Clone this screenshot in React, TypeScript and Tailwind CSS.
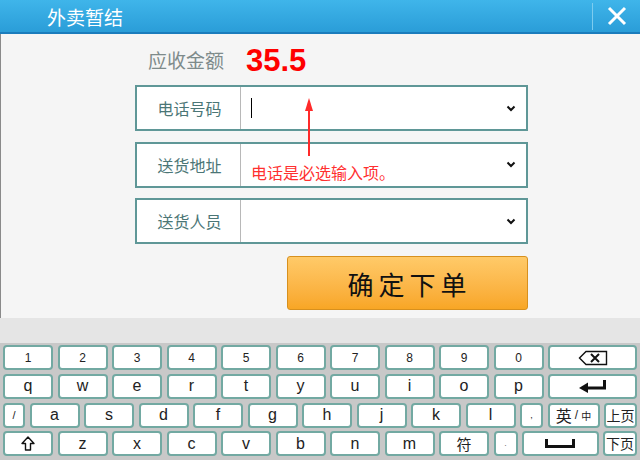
import type { ReactNode } from 'react'

const cjk = { fontFamily: '"Noto Sans CJK SC", "Liberation Sans", sans-serif' }
const latin = { fontFamily: '"Liberation Sans", Arial, sans-serif' }

function Chevron() {
  return (
    <svg width="10" height="7" viewBox="0 0 10 7" className="mr-[10px]">
      <polyline points="1.5,1.5 5,5 8.5,1.5" fill="none" stroke="#111" strokeWidth="2" />
    </svg>
  )
}

function Field({ label, cursor }: { label: string; cursor?: boolean }) {
  return (
    <div className="flex h-[46px] w-[393px] items-stretch border-2 border-[#5f9797] bg-white">
      <div className="flex w-[104px] items-center justify-center border-r border-[#b8b8b8] pl-[2px] text-[16px] text-[#4b7676]" style={cjk}>
        {label}
      </div>
      <div className="flex flex-1 items-center justify-between pl-[10px]">
        {cursor ? <span className="h-[20px] w-px bg-black" /> : <span />}
        <Chevron />
      </div>
    </div>
  )
}

function Key({ w, children, className = '' }: { w?: string; children: ReactNode; className?: string }) {
  return (
    <div
      className={`flex h-[25px] items-center justify-center rounded-[4px] border-2 border-[#72a9a2] bg-white text-[#222] ${w ?? 'w-[50px]'} ${className}`}
      style={latin}
    >
      {children}
    </div>
  )
}

function Backspace() {
  return (
    <svg width="30" height="16" viewBox="0 0 30 16">
      <path d="M8 1.5 H28.5 V14.5 H8 L1.5 8 Z" fill="none" stroke="#111" strokeWidth="1.4" />
      <path d="M13 4 L21 12 M21 4 L13 12" stroke="#111" strokeWidth="2" />
    </svg>
  )
}

function Enter() {
  return (
    <svg width="30" height="14" viewBox="0 0 30 14">
      <path d="M26.5 1 V9 H8" fill="none" stroke="#111" strokeWidth="3" />
      <path d="M1 9 L10 3.5 V14 Z" fill="#111" />
    </svg>
  )
}

function Shift() {
  return (
    <svg width="14" height="15" viewBox="0 0 14 15">
      <path d="M7 1 L13 7.5 H9.5 V14 H4.5 V7.5 H1 Z" fill="none" stroke="#111" strokeWidth="1.4" strokeLinejoin="round" />
    </svg>
  )
}

function Space() {
  return (
    <svg width="30" height="9" viewBox="0 0 30 9">
      <path d="M1.5 0 V7.5 H28.5 V0" fill="none" stroke="#111" strokeWidth="3" />
    </svg>
  )
}

export default function App() {
  const nums = ['1', '2', '3', '4', '5', '6', '7', '8', '9', '0']
  const row2 = ['q', 'w', 'e', 'r', 't', 'y', 'u', 'i', 'o', 'p']
  const row3 = ['a', 's', 'd', 'f', 'g', 'h', 'j', 'k', 'l']
  const row4 = ['z', 'x', 'c', 'v', 'b', 'n', 'm']

  return (
    <div className="flex h-[460px] w-[640px] flex-col overflow-hidden bg-[#c8c8c8]">
      <header className="flex h-[34px] shrink-0 items-center justify-between border-b-2 border-[#1b7cbc] bg-gradient-to-b from-[#3fb5ea] to-[#2a9dd8]">
        <h1 className="pl-[47px] text-[19px] leading-none text-white" style={cjk}>
          外卖暂结
        </h1>
        <div className="flex h-full items-center">
          <span className="h-[27px] w-px bg-[#7dccef]" />
          <svg width="20" height="20" viewBox="0 0 20 20" className="ml-[14px] mr-[13px]">
            <path d="M2 2 L18 18 M18 2 L2 18" stroke="#fff" strokeWidth="3" />
          </svg>
        </div>
      </header>

      <main className="relative flex h-[284px] shrink-0 flex-col border-l border-[#8a8a8a] bg-[#f5f5f5] pl-[134px]">
        <div className="flex h-[51px] items-center pl-[13px] pt-[1px]">
          <span className="text-[19px] text-[#7e8b8b]" style={cjk}>应收金额</span>
          <span className="ml-[22px] text-[31px] font-bold leading-none text-[#ff0000]" style={latin}>35.5</span>
        </div>
        <div className="flex flex-col gap-[10.5px]">
          <Field label="电话号码" cursor />
          <Field label="送货地址" />
          <Field label="送货人员" />
        </div>
        <button
          className="ml-[152px] mt-[12px] flex h-[54px] w-[241px] items-center justify-center rounded-[3px] border border-[#d7901e] bg-gradient-to-b from-[#ffca68] to-[#f8a624] pl-[4px] text-[26px] tracking-[5px] text-[#111]"
          style={cjk}
        >
          确定下单
        </button>

        <svg width="12" height="60" viewBox="0 0 12 60" className="absolute left-[302px] top-[64px]">
          <path d="M6 0 L10 13 H2 Z" fill="#ff2a2a" />
          <path d="M6 10 V58" stroke="#ff2a2a" strokeWidth="2" />
        </svg>
        <div className="absolute left-[250px] top-[128px] text-[16px] leading-[20px] text-[#ff3030]" style={cjk}>
          电话是必选输入项。
        </div>
      </main>

      <div className="h-[25px] shrink-0 bg-[#e5e5e5]" />

      <div className="flex flex-1 flex-col gap-[3.8px] pl-[3px] pr-[3px] pt-[2px]">
        <div className="flex gap-[4.5px]">
          {nums.map((n) => (
            <Key key={n} className="text-[12px]">{n}</Key>
          ))}
          <Key w="flex-1"><Backspace /></Key>
        </div>
        <div className="flex gap-[4.5px]">
          {row2.map((n) => (
            <Key key={n} className="text-[16px]">{n}</Key>
          ))}
          <Key w="flex-1"><Enter /></Key>
        </div>
        <div className="flex gap-[4.5px]">
          <Key w="w-[22px]" className="text-[11px]">/</Key>
          {row3.map((n) => (
            <Key key={n} className="text-[16px]">{n}</Key>
          ))}
          <Key w="w-[23px]" className="items-end pb-[3px] text-[9px]">,</Key>
          <Key w="w-[52px]">
            <span className="text-[16px]" style={cjk}>英</span>
            <span className="ml-[3px] text-[12px]">/</span>
            <span className="ml-[3px] text-[10px]" style={cjk}>中</span>
          </Key>
          <Key w="flex-1" className="text-[14px]">
            <span style={cjk}>上页</span>
          </Key>
        </div>
        <div className="flex gap-[4.5px]">
          <Key><Shift /></Key>
          {row4.map((n) => (
            <Key key={n} className="text-[16px]">{n}</Key>
          ))}
          <Key className="text-[15px]">
            <span style={cjk}>符</span>
          </Key>
          <Key w="w-[24px]" className="items-end pb-[4px] text-[9px] text-[#777]">.</Key>
          <Key w="flex-1"><Space /></Key>
          <Key w="w-[34px]" className="text-[14px]">
            <span style={cjk}>下页</span>
          </Key>
        </div>
      </div>
    </div>
  )
}
